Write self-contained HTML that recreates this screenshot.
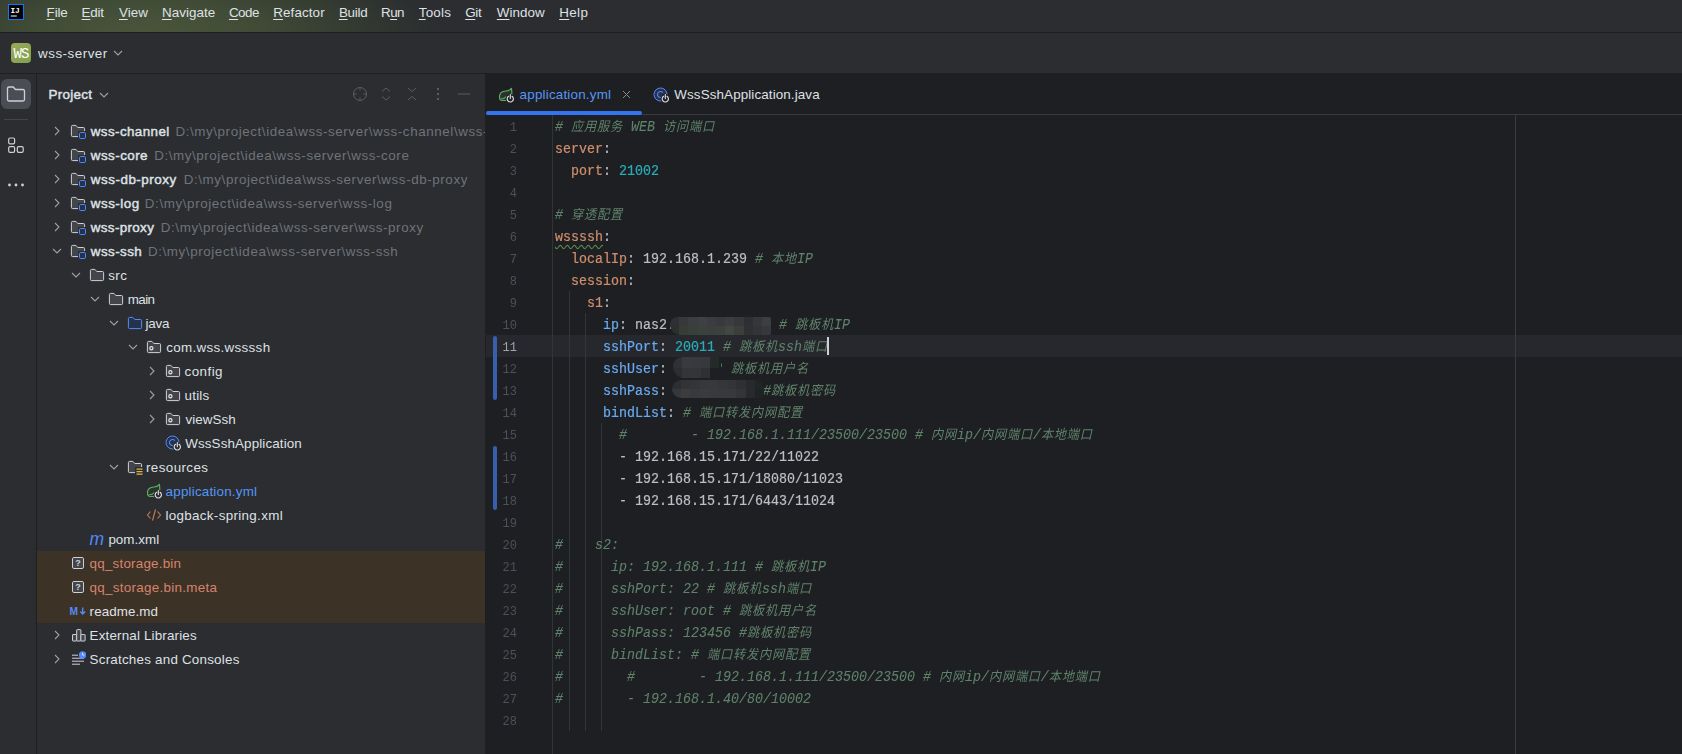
<!DOCTYPE html><html lang="zh"><head><meta charset="utf-8"><title>wss-server – application.yml</title><style>
*{box-sizing:border-box;margin:0;padding:0}
html,body{width:1682px;height:754px;overflow:hidden;background:#1e1f22}
body{position:relative;font-family:"Liberation Sans","Noto Sans CJK SC",sans-serif;font-size:13.4px;color:#dfe1e5;-webkit-font-smoothing:antialiased}
.abs{position:absolute}
#menubar{left:0;top:0;width:1682px;height:32px;background:radial-gradient(ellipse 295px 95px at 145px 36px,#4a563b 0%,#414c37 38%,#343b31 70%,#2b2d30 100%),#2b2d30}
#menuline{left:0;top:32px;width:1682px;height:1px;background:#1e1f22}
#toolbar{left:0;top:33px;width:1682px;height:40px;background:#2b2d30}
#toolline{left:0;top:73px;width:1682px;height:1px;background:#1e1f22}
#strip{left:0;top:74px;width:36px;height:680px;background:#2b2d30}
#stripline{left:36px;top:74px;width:1px;height:680px;background:#1e1f22}
#panel{left:37px;top:74px;width:448px;height:680px;background:#2b2d30;overflow:hidden}
#editor{left:486px;top:74px;width:1196px;height:680px;background:#1e1f22;overflow:hidden}
.mi{position:absolute;top:5px;height:16px;line-height:16px;font-size:13.4px;color:#dfe1e5;white-space:nowrap}
.mi u{text-decoration:underline;text-underline-offset:1.5px;text-decoration-thickness:1px}
.t{position:absolute;white-space:nowrap;line-height:16px;height:16px;font-size:13.4px}
.row{position:absolute;left:0;width:449px;height:24px}
.gray{color:#6f737a}
.mono{font-family:"Liberation Mono","Noto Sans CJK SC",monospace}
.b{font-weight:normal;-webkit-text-stroke:0.45px currentColor}
.code{position:absolute;left:69px;margin-top:1.5px;transform:scaleY(1.09);transform-origin:0 14.6px;-webkit-text-stroke:0.2px currentColor;white-space:pre;font-family:"Liberation Mono","Noto Sans CJK SC",monospace;font-size:13.333px;line-height:22px;height:22px;color:#bcbec4}
.ln{position:absolute;left:0;margin-top:2px;transform:scaleY(1.09);transform-origin:0 14.2px;width:31px;text-align:right;font-family:"Liberation Mono","Noto Sans CJK SC",monospace;font-size:12px;line-height:22px;height:22px;color:#4b5059}
.k{color:#cf8e6d} .k2{color:#6aaaf0} .n{color:#2aacb8} .c{color:#5f826b;font-style:italic;-webkit-text-stroke:0.08px currentColor}
.z{font-size:12.2px;letter-spacing:0.8px;font-weight:400;-webkit-text-stroke:0}
.guide{position:absolute;width:1px;background:#313438}
.chg{position:absolute;left:7px;width:4px;background:#375fad;border-radius:2px}
.mosaic{position:absolute;filter:blur(1.2px)}
</style></head><body>
<div id="menubar" class="abs"></div><div id="menuline" class="abs"></div>
<svg class="abs" style="left:8px;top:4px" width="16" height="16" viewBox="0 0 16 16"><rect x="0.5" y="0.5" width="15" height="15" fill="#000" stroke="#087cfa" stroke-width="1"/><text x="2.4" y="8.8" font-family='"Liberation Mono",monospace' font-weight="bold" font-size="7.8" fill="#fff">IJ</text><rect x="2.8" y="11.5" width="6" height="1" fill="#fff"/></svg>
<div class="mi" id="m_File" style="left:46.60px;letter-spacing:-0.133px"><u>F</u>ile</div>
<div class="mi" id="m_Edit" style="left:81.60px;letter-spacing:-0.267px"><u>E</u>dit</div>
<div class="mi" id="m_View" style="left:119.00px;letter-spacing:0.000px"><u>V</u>iew</div>
<div class="mi" id="m_Navigate" style="left:161.90px;letter-spacing:0.057px"><u>N</u>avigate</div>
<div class="mi" id="m_Code" style="left:228.90px;letter-spacing:-0.467px"><u>C</u>ode</div>
<div class="mi" id="m_Refactor" style="left:273.20px;letter-spacing:0.114px"><u>R</u>efactor</div>
<div class="mi" id="m_Build" style="left:338.90px;letter-spacing:-0.250px"><u>B</u>uild</div>
<div class="mi" id="m_Run" style="left:381.10px;letter-spacing:-0.600px">R<u>u</u>n</div>
<div class="mi" id="m_Tools" style="left:418.80px;letter-spacing:0.200px"><u>T</u>ools</div>
<div class="mi" id="m_Git" style="left:465.20px;letter-spacing:-0.300px"><u>G</u>it</div>
<div class="mi" id="m_Window" style="left:496.80px;letter-spacing:0.040px"><u>W</u>indow</div>
<div class="mi" id="m_Help" style="left:559.20px;letter-spacing:0.400px"><u>H</u>elp</div>
<div id="toolbar" class="abs"></div><div id="toolline" class="abs"></div>
<div class="abs" style="left:11px;top:43px;width:20px;height:20px;border-radius:4px;background:linear-gradient(135deg,#9aa85a,#7fa24e)"></div>
<div class="t mono" id="t_ws" style="left:13.4px;top:46px;font-size:14px;color:#fff;letter-spacing:-0.7px">WS</div>
<div class="t" id="t_proj" style="left:38.10px;letter-spacing:0.489px;top:45.5px">wss-server</div>
<svg class="abs" style="left:113px;top:49px" width="10" height="8" viewBox="0 0 10 8"><path d="M1 2 L5 6 L9 2" fill="none" stroke="#9da0a8" stroke-width="1.1"/></svg>
<div id="strip" class="abs"></div><div id="stripline" class="abs"></div>
<div class="abs" style="left:1px;top:79px;width:30px;height:30px;border-radius:6px;background:#4a4d54"></div>
<svg class="abs" style="left:6px;top:85px" width="20" height="18" viewBox="0 0 20 18"><path d="M1.5 3.5 a1.5 1.5 0 0 1 1.5 -1.5 h4.2 l2.3 2.5 h7.5 a1.5 1.5 0 0 1 1.5 1.5 v8.5 a1.5 1.5 0 0 1 -1.5 1.5 h-14 a1.5 1.5 0 0 1 -1.5 -1.5 z" fill="none" stroke="#ced0d6" stroke-width="1.3"/></svg>
<div class="abs" style="left:4px;top:119px;width:24px;height:1px;background:#43454a"></div>
<svg class="abs" style="left:7px;top:136px" width="18" height="18" viewBox="0 0 18 18"><g fill="none" stroke="#ced0d6" stroke-width="1.2"><rect x="1.7" y="2" width="5.9" height="5.8" rx="1.3"/><rect x="1.7" y="10.6" width="5.9" height="5.8" rx="1.3"/><rect x="10.3" y="10.6" width="5.9" height="5.8" rx="1.3"/></g></svg>
<svg class="abs" style="left:7px;top:182px" width="18" height="6" viewBox="0 0 18 6"><g fill="#ced0d6"><circle cx="2.5" cy="3" r="1.4"/><circle cx="9" cy="3" r="1.4"/><circle cx="15.5" cy="3" r="1.4"/></g></svg>
<div id="panel" class="abs">
<div class="t b" id="t_Project" style="left:11.60px;letter-spacing:0.267px;top:13px">Project</div>
<svg class="abs" style="left:62px;top:17px" width="10" height="8" viewBox="0 0 10 8"><path d="M1 2 L5 6 L9 2" fill="none" stroke="#9da0a8" stroke-width="1.1"/></svg>
<svg class="abs" style="left:315px;top:12px" width="16" height="16" viewBox="0 0 16 16"><g fill="none" stroke="#5a5d63" stroke-width="1"><circle cx="8" cy="8" r="6.5"/><path d="M8 1.5v3M8 11.5v3M1.5 8h3M11.5 8h3"/></g></svg>
<svg class="abs" style="left:341px;top:12px" width="16" height="16" viewBox="0 0 16 16"><g fill="none" stroke="#5a5d63" stroke-width="1"><path d="M4 5.5 L8 2 L12 5.5M4 10.5 L8 14 L12 10.5"/></g></svg>
<svg class="abs" style="left:367px;top:12px" width="16" height="16" viewBox="0 0 16 16"><g fill="none" stroke="#5a5d63" stroke-width="1"><path d="M4 2 L8 5.5 L12 2M4 14 L8 10.5 L12 14"/></g></svg>
<svg class="abs" style="left:393px;top:12px" width="16" height="16" viewBox="0 0 16 16"><g fill="#5a5d63"><rect x="7" y="2" width="2" height="2"/><rect x="7" y="7" width="2" height="2"/><rect x="7" y="12" width="2" height="2"/></g></svg>
<svg class="abs" style="left:419px;top:12px" width="16" height="16" viewBox="0 0 16 16"><rect x="1.7" y="7.5" width="12.6" height="1" fill="#5a5d63"/></svg>
<div class="abs" style="left:0;top:477px;width:449px;height:72px;background:#3d3226"></div>
<svg class="abs" style="left:15.5px;top:52px" width="8" height="10" viewBox="0 0 8 10"><path d="M2 1 L6 5 L2 9" fill="none" stroke="#9da0a8" stroke-width="1.1"/></svg>
<svg class="abs" style="left:33px;top:49px" width="16" height="16" viewBox="0 0 16 16"><path d="M1.4 3.6 a1.2 1.2 0 0 1 1.2 -1.2 h3.3 l1.9 2.1 h5.6 a1.2 1.2 0 0 1 1.2 1.2 v6.7 a1.2 1.2 0 0 1 -1.2 1.2 h-10.8 a1.2 1.2 0 0 1 -1.2 -1.2 z" fill="#43454a" stroke="#ced0d6" stroke-width="1"/><rect x="8" y="8" width="8" height="8" fill="#2b2d30"/><rect x="9.5" y="9.5" width="6" height="6" rx="1.2" fill="#25324d" stroke="#548af7" stroke-width="1"/></svg>
<div class="t b" id="r0" style="left:53.80px;letter-spacing:0.400px;top:49.5px;color:#dfe1e5">wss-channel</div>
<div class="t gray" id="p0" style="left:138.40px;letter-spacing:0.585px;top:49.5px">D:\my\project\idea\wss-server\wss-channel\wss-channel</div>
<svg class="abs" style="left:15.5px;top:76px" width="8" height="10" viewBox="0 0 8 10"><path d="M2 1 L6 5 L2 9" fill="none" stroke="#9da0a8" stroke-width="1.1"/></svg>
<svg class="abs" style="left:33px;top:73px" width="16" height="16" viewBox="0 0 16 16"><path d="M1.4 3.6 a1.2 1.2 0 0 1 1.2 -1.2 h3.3 l1.9 2.1 h5.6 a1.2 1.2 0 0 1 1.2 1.2 v6.7 a1.2 1.2 0 0 1 -1.2 1.2 h-10.8 a1.2 1.2 0 0 1 -1.2 -1.2 z" fill="#43454a" stroke="#ced0d6" stroke-width="1"/><rect x="8" y="8" width="8" height="8" fill="#2b2d30"/><rect x="9.5" y="9.5" width="6" height="6" rx="1.2" fill="#25324d" stroke="#548af7" stroke-width="1"/></svg>
<div class="t b" id="r1" style="left:53.80px;letter-spacing:0.457px;top:73.5px;color:#dfe1e5">wss-core</div>
<div class="t gray" id="p1" style="left:117.20px;letter-spacing:0.568px;top:73.5px">D:\my\project\idea\wss-server\wss-core</div>
<svg class="abs" style="left:15.5px;top:100px" width="8" height="10" viewBox="0 0 8 10"><path d="M2 1 L6 5 L2 9" fill="none" stroke="#9da0a8" stroke-width="1.1"/></svg>
<svg class="abs" style="left:33px;top:97px" width="16" height="16" viewBox="0 0 16 16"><path d="M1.4 3.6 a1.2 1.2 0 0 1 1.2 -1.2 h3.3 l1.9 2.1 h5.6 a1.2 1.2 0 0 1 1.2 1.2 v6.7 a1.2 1.2 0 0 1 -1.2 1.2 h-10.8 a1.2 1.2 0 0 1 -1.2 -1.2 z" fill="#43454a" stroke="#ced0d6" stroke-width="1"/><rect x="8" y="8" width="8" height="8" fill="#2b2d30"/><rect x="9.5" y="9.5" width="6" height="6" rx="1.2" fill="#25324d" stroke="#548af7" stroke-width="1"/></svg>
<div class="t b" id="r2" style="left:53.80px;letter-spacing:0.527px;top:97.5px;color:#dfe1e5">wss-db-proxy</div>
<div class="t gray" id="p2" style="left:146.70px;letter-spacing:0.585px;top:97.5px">D:\my\project\idea\wss-server\wss-db-proxy</div>
<svg class="abs" style="left:15.5px;top:124px" width="8" height="10" viewBox="0 0 8 10"><path d="M2 1 L6 5 L2 9" fill="none" stroke="#9da0a8" stroke-width="1.1"/></svg>
<svg class="abs" style="left:33px;top:121px" width="16" height="16" viewBox="0 0 16 16"><path d="M1.4 3.6 a1.2 1.2 0 0 1 1.2 -1.2 h3.3 l1.9 2.1 h5.6 a1.2 1.2 0 0 1 1.2 1.2 v6.7 a1.2 1.2 0 0 1 -1.2 1.2 h-10.8 a1.2 1.2 0 0 1 -1.2 -1.2 z" fill="#43454a" stroke="#ced0d6" stroke-width="1"/><rect x="8" y="8" width="8" height="8" fill="#2b2d30"/><rect x="9.5" y="9.5" width="6" height="6" rx="1.2" fill="#25324d" stroke="#548af7" stroke-width="1"/></svg>
<div class="t b" id="r3" style="left:53.80px;letter-spacing:0.500px;top:121.5px;color:#dfe1e5">wss-log</div>
<div class="t gray" id="p3" style="left:107.80px;letter-spacing:0.600px;top:121.5px">D:\my\project\idea\wss-server\wss-log</div>
<svg class="abs" style="left:15.5px;top:148px" width="8" height="10" viewBox="0 0 8 10"><path d="M2 1 L6 5 L2 9" fill="none" stroke="#9da0a8" stroke-width="1.1"/></svg>
<svg class="abs" style="left:33px;top:145px" width="16" height="16" viewBox="0 0 16 16"><path d="M1.4 3.6 a1.2 1.2 0 0 1 1.2 -1.2 h3.3 l1.9 2.1 h5.6 a1.2 1.2 0 0 1 1.2 1.2 v6.7 a1.2 1.2 0 0 1 -1.2 1.2 h-10.8 a1.2 1.2 0 0 1 -1.2 -1.2 z" fill="#43454a" stroke="#ced0d6" stroke-width="1"/><rect x="8" y="8" width="8" height="8" fill="#2b2d30"/><rect x="9.5" y="9.5" width="6" height="6" rx="1.2" fill="#25324d" stroke="#548af7" stroke-width="1"/></svg>
<div class="t b" id="r4" style="left:53.80px;letter-spacing:0.350px;top:145.5px;color:#dfe1e5">wss-proxy</div>
<div class="t gray" id="p4" style="left:123.80px;letter-spacing:0.579px;top:145.5px">D:\my\project\idea\wss-server\wss-proxy</div>
<svg class="abs" style="left:14.5px;top:173px" width="10" height="8" viewBox="0 0 10 8"><path d="M1 2 L5 6 L9 2" fill="none" stroke="#9da0a8" stroke-width="1.1"/></svg>
<svg class="abs" style="left:33px;top:169px" width="16" height="16" viewBox="0 0 16 16"><path d="M1.4 3.6 a1.2 1.2 0 0 1 1.2 -1.2 h3.3 l1.9 2.1 h5.6 a1.2 1.2 0 0 1 1.2 1.2 v6.7 a1.2 1.2 0 0 1 -1.2 1.2 h-10.8 a1.2 1.2 0 0 1 -1.2 -1.2 z" fill="#43454a" stroke="#ced0d6" stroke-width="1"/><rect x="8" y="8" width="8" height="8" fill="#2b2d30"/><rect x="9.5" y="9.5" width="6" height="6" rx="1.2" fill="#25324d" stroke="#548af7" stroke-width="1"/></svg>
<div class="t b" id="r5" style="left:53.80px;letter-spacing:0.433px;top:169.5px;color:#dfe1e5">wss-ssh</div>
<div class="t gray" id="p5" style="left:110.90px;letter-spacing:0.594px;top:169.5px">D:\my\project\idea\wss-server\wss-ssh</div>
<svg class="abs" style="left:33.5px;top:197px" width="10" height="8" viewBox="0 0 10 8"><path d="M1 2 L5 6 L9 2" fill="none" stroke="#9da0a8" stroke-width="1.1"/></svg>
<svg class="abs" style="left:52px;top:193px" width="16" height="16" viewBox="0 0 16 16"><path d="M1.4 3.6 a1.2 1.2 0 0 1 1.2 -1.2 h3.3 l1.9 2.1 h5.6 a1.2 1.2 0 0 1 1.2 1.2 v6.7 a1.2 1.2 0 0 1 -1.2 1.2 h-10.8 a1.2 1.2 0 0 1 -1.2 -1.2 z" fill="#43454a" stroke="#ced0d6" stroke-width="1"/></svg>
<div class="t" id="r6" style="left:71.20px;letter-spacing:0.400px;top:193.5px;color:#dfe1e5">src</div>
<svg class="abs" style="left:52.5px;top:221px" width="10" height="8" viewBox="0 0 10 8"><path d="M1 2 L5 6 L9 2" fill="none" stroke="#9da0a8" stroke-width="1.1"/></svg>
<svg class="abs" style="left:71px;top:217px" width="16" height="16" viewBox="0 0 16 16"><path d="M1.4 3.6 a1.2 1.2 0 0 1 1.2 -1.2 h3.3 l1.9 2.1 h5.6 a1.2 1.2 0 0 1 1.2 1.2 v6.7 a1.2 1.2 0 0 1 -1.2 1.2 h-10.8 a1.2 1.2 0 0 1 -1.2 -1.2 z" fill="#43454a" stroke="#ced0d6" stroke-width="1"/></svg>
<div class="t" id="r7" style="left:90.80px;letter-spacing:-0.600px;top:217.5px;color:#dfe1e5">main</div>
<svg class="abs" style="left:71.5px;top:245px" width="10" height="8" viewBox="0 0 10 8"><path d="M1 2 L5 6 L9 2" fill="none" stroke="#9da0a8" stroke-width="1.1"/></svg>
<svg class="abs" style="left:90px;top:241px" width="16" height="16" viewBox="0 0 16 16"><path d="M1.4 3.6 a1.2 1.2 0 0 1 1.2 -1.2 h3.3 l1.9 2.1 h5.6 a1.2 1.2 0 0 1 1.2 1.2 v6.7 a1.2 1.2 0 0 1 -1.2 1.2 h-10.8 a1.2 1.2 0 0 1 -1.2 -1.2 z" fill="#25324d" stroke="#548af7" stroke-width="1"/></svg>
<div class="t" id="r8" style="left:108.60px;letter-spacing:-0.200px;top:241.5px;color:#dfe1e5">java</div>
<svg class="abs" style="left:90.5px;top:269px" width="10" height="8" viewBox="0 0 10 8"><path d="M1 2 L5 6 L9 2" fill="none" stroke="#9da0a8" stroke-width="1.1"/></svg>
<svg class="abs" style="left:109px;top:265px" width="16" height="16" viewBox="0 0 16 16"><path d="M1.4 3.6 a1.2 1.2 0 0 1 1.2 -1.2 h3.3 l1.9 2.1 h5.6 a1.2 1.2 0 0 1 1.2 1.2 v6.7 a1.2 1.2 0 0 1 -1.2 1.2 h-10.8 a1.2 1.2 0 0 1 -1.2 -1.2 z" fill="#43454a" stroke="#ced0d6" stroke-width="1"/><circle cx="5.4" cy="9.2" r="1.6" fill="#43454a" stroke="#e6e8ec" stroke-width="1.15"/></svg>
<div class="t" id="r9" style="left:129.20px;letter-spacing:0.323px;top:265.5px;color:#dfe1e5">com.wss.wssssh</div>
<svg class="abs" style="left:110.5px;top:292px" width="8" height="10" viewBox="0 0 8 10"><path d="M2 1 L6 5 L2 9" fill="none" stroke="#9da0a8" stroke-width="1.1"/></svg>
<svg class="abs" style="left:128px;top:289px" width="16" height="16" viewBox="0 0 16 16"><path d="M1.4 3.6 a1.2 1.2 0 0 1 1.2 -1.2 h3.3 l1.9 2.1 h5.6 a1.2 1.2 0 0 1 1.2 1.2 v6.7 a1.2 1.2 0 0 1 -1.2 1.2 h-10.8 a1.2 1.2 0 0 1 -1.2 -1.2 z" fill="#43454a" stroke="#ced0d6" stroke-width="1"/><circle cx="5.4" cy="9.2" r="1.6" fill="#43454a" stroke="#e6e8ec" stroke-width="1.15"/></svg>
<div class="t" id="r10" style="left:147.60px;letter-spacing:0.440px;top:289.5px;color:#dfe1e5">config</div>
<svg class="abs" style="left:110.5px;top:316px" width="8" height="10" viewBox="0 0 8 10"><path d="M2 1 L6 5 L2 9" fill="none" stroke="#9da0a8" stroke-width="1.1"/></svg>
<svg class="abs" style="left:128px;top:313px" width="16" height="16" viewBox="0 0 16 16"><path d="M1.4 3.6 a1.2 1.2 0 0 1 1.2 -1.2 h3.3 l1.9 2.1 h5.6 a1.2 1.2 0 0 1 1.2 1.2 v6.7 a1.2 1.2 0 0 1 -1.2 1.2 h-10.8 a1.2 1.2 0 0 1 -1.2 -1.2 z" fill="#43454a" stroke="#ced0d6" stroke-width="1"/><circle cx="5.4" cy="9.2" r="1.6" fill="#43454a" stroke="#e6e8ec" stroke-width="1.15"/></svg>
<div class="t" id="r11" style="left:147.60px;letter-spacing:0.200px;top:313.5px;color:#dfe1e5">utils</div>
<svg class="abs" style="left:110.5px;top:340px" width="8" height="10" viewBox="0 0 8 10"><path d="M2 1 L6 5 L2 9" fill="none" stroke="#9da0a8" stroke-width="1.1"/></svg>
<svg class="abs" style="left:128px;top:337px" width="16" height="16" viewBox="0 0 16 16"><path d="M1.4 3.6 a1.2 1.2 0 0 1 1.2 -1.2 h3.3 l1.9 2.1 h5.6 a1.2 1.2 0 0 1 1.2 1.2 v6.7 a1.2 1.2 0 0 1 -1.2 1.2 h-10.8 a1.2 1.2 0 0 1 -1.2 -1.2 z" fill="#43454a" stroke="#ced0d6" stroke-width="1"/><circle cx="5.4" cy="9.2" r="1.6" fill="#43454a" stroke="#e6e8ec" stroke-width="1.15"/></svg>
<div class="t" id="r12" style="left:148.60px;letter-spacing:0.033px;top:337.5px;color:#dfe1e5">viewSsh</div>
<svg class="abs" style="left:128px;top:361px" width="16" height="16" viewBox="0 0 16 16"><circle cx="7.5" cy="7.5" r="6.5" fill="#25324d" stroke="#548af7" stroke-width="1"/><path d="M9.8 5.6 a3 3 0 1 0 0 3.8" fill="none" stroke="#548af7" stroke-width="1.1"/><circle cx="12.3" cy="11.8" r="4.7" fill="#2b2d30"/><path d="M10.6 9.3 a3.1 3.1 0 1 0 3.4 0M12.3 7.6v4" fill="none" stroke="#dfe1e5" stroke-width="1.15" stroke-linecap="round"/></svg>
<div class="t" id="r13" style="left:148.20px;letter-spacing:0.125px;top:361.5px;color:#dfe1e5">WssSshApplication</div>
<svg class="abs" style="left:71.5px;top:389px" width="10" height="8" viewBox="0 0 10 8"><path d="M1 2 L5 6 L9 2" fill="none" stroke="#9da0a8" stroke-width="1.1"/></svg>
<svg class="abs" style="left:90px;top:385px" width="16" height="16" viewBox="0 0 16 16"><path d="M1.4 3.6 a1.2 1.2 0 0 1 1.2 -1.2 h3.3 l1.9 2.1 h5.6 a1.2 1.2 0 0 1 1.2 1.2 v6.7 a1.2 1.2 0 0 1 -1.2 1.2 h-10.8 a1.2 1.2 0 0 1 -1.2 -1.2 z" fill="#43454a" stroke="#ced0d6" stroke-width="1"/><rect x="8" y="8" width="8" height="8" fill="#2b2d30"/><path d="M9.5 10h6M9.5 12.5h6M9.5 15h6" stroke="#e2b54a" stroke-width="1.25"/></svg>
<div class="t" id="r14" style="left:109.00px;letter-spacing:0.400px;top:385.5px;color:#dfe1e5">resources</div>
<svg class="abs" style="left:109px;top:409px" width="16" height="16" viewBox="0 0 16 16"><path d="M13.4 1.3 C12.2 3 10.5 3.8 8 4 C4 4.3 1.5 6.3 1.5 9.5 C1.5 12 2.6 13.5 4.2 13.5 L9 13.5 C12.6 12.5 14.8 8 13.4 1.3 Z" fill="#29352c" stroke="#5fad65" stroke-width="1.2" stroke-linejoin="round"/><path d="M3.2 11.7 C5.4 11.9 7.2 11 8.4 9.2" fill="none" stroke="#5fad65" stroke-width="1.1"/><circle cx="12.3" cy="11.8" r="4.7" fill="#2b2d30"/><path d="M10.6 9.3 a3.1 3.1 0 1 0 3.4 0M12.3 7.6v4" fill="none" stroke="#dfe1e5" stroke-width="1.15" stroke-linecap="round"/></svg>
<div class="t" id="r15" style="left:128.60px;letter-spacing:0.200px;top:409.5px;color:#5596f4">application.yml</div>
<svg class="abs" style="left:109px;top:433px" width="16" height="16" viewBox="0 0 16 16"><path d="M4.5 4.5 L1.5 8 L4.5 11.5M11.5 4.5 L14.5 8 L11.5 11.5M9.5 2.5 L6.5 13.5" fill="none" stroke="#c77d55" stroke-width="1.1"/></svg>
<div class="t" id="r16" style="left:128.40px;letter-spacing:0.329px;top:433.5px;color:#dfe1e5">logback-spring.xml</div>
<div class="t ico" style="left:52.5px;top:455.7px;font-size:17.5px;line-height:18px;font-style:italic;color:#548af7">m</div>
<div class="t" id="r17" style="left:71.40px;letter-spacing:0.033px;top:457.5px;color:#dfe1e5">pom.xml</div>
<svg class="abs" style="left:33px;top:481px" width="16" height="16" viewBox="0 0 16 16"><rect x="2.5" y="2.5" width="11" height="11" rx="1.4" fill="#43454a" stroke="#ced0d6" stroke-width="1"/><text x="8" y="11.3" text-anchor="middle" font-family='"Liberation Sans",sans-serif' font-weight="bold" font-size="9" fill="#ced0d6">?</text></svg>
<div class="t" id="r18" style="left:52.60px;letter-spacing:0.215px;top:481.5px;color:#d6836d">qq_storage.bin</div>
<svg class="abs" style="left:33px;top:505px" width="16" height="16" viewBox="0 0 16 16"><rect x="2.5" y="2.5" width="11" height="11" rx="1.4" fill="#43454a" stroke="#ced0d6" stroke-width="1"/><text x="8" y="11.3" text-anchor="middle" font-family='"Liberation Sans",sans-serif' font-weight="bold" font-size="9" fill="#ced0d6">?</text></svg>
<div class="t" id="r19" style="left:52.60px;letter-spacing:0.289px;top:505.5px;color:#d6836d">qq_storage.bin.meta</div>
<svg class="abs" style="left:32px;top:529px" width="18" height="16" viewBox="0 0 18 16"><text x="0.6" y="11.6" font-family='"Liberation Sans",sans-serif' font-weight="bold" font-size="10.2" fill="#548af7">M</text><path d="M13.7 4.6v6.2M11.3 8.6l2.4 2.5l2.4 -2.5" fill="none" stroke="#548af7" stroke-width="1.4"/></svg>
<div class="t" id="r20" style="left:52.60px;letter-spacing:0.075px;top:529.5px;color:#dfe1e5">readme.md</div>
<svg class="abs" style="left:15.5px;top:556px" width="8" height="10" viewBox="0 0 8 10"><path d="M2 1 L6 5 L2 9" fill="none" stroke="#9da0a8" stroke-width="1.1"/></svg>
<svg class="abs" style="left:33px;top:553px" width="16" height="16" viewBox="0 0 16 16"><g fill="#43454a" stroke="#ced0d6" stroke-width="1"><rect x="2.5" y="7.5" width="4.2" height="6.5" rx="0.5"/><rect x="6.7" y="2.6" width="4.2" height="11.4" rx="0.5"/><rect x="10.9" y="7.5" width="4.2" height="6.5" rx="0.5"/></g></svg>
<div class="t" id="r21" style="left:52.60px;letter-spacing:0.165px;top:553.5px;color:#dfe1e5">External Libraries</div>
<svg class="abs" style="left:15.5px;top:580px" width="8" height="10" viewBox="0 0 8 10"><path d="M2 1 L6 5 L2 9" fill="none" stroke="#9da0a8" stroke-width="1.1"/></svg>
<svg class="abs" style="left:33px;top:577px" width="16" height="16" viewBox="0 0 16 16"><g fill="none" stroke="#ced0d6" stroke-width="1"><path d="M2 4.2h6M2 7.2h12M2 10.2h12M2 13.2h8"/></g><circle cx="12.6" cy="3.9" r="3.7" fill="#548af7"/><path d="M12.6 1.8v2.3h1.7" stroke="#e8eaef" stroke-width="0.9" fill="none"/></svg>
<div class="t" id="r22" style="left:52.60px;letter-spacing:0.219px;top:577.5px;color:#dfe1e5">Scratches and Consoles</div>
</div>
<div id="editor" class="abs">
<div class="abs" style="left:0;top:40px;width:1196px;height:1px;background:#393b40"></div>
<div class="abs" style="left:0;top:37px;width:156px;height:4px;border-radius:2px;background:#3574f0"></div>
<svg class="abs" style="left:11.6px;top:13px" width="16" height="16" viewBox="0 0 16 16"><path d="M13.4 1.3 C12.2 3 10.5 3.8 8 4 C4 4.3 1.5 6.3 1.5 9.5 C1.5 12 2.6 13.5 4.2 13.5 L9 13.5 C12.6 12.5 14.8 8 13.4 1.3 Z" fill="#29352c" stroke="#5fad65" stroke-width="1.2" stroke-linejoin="round"/><path d="M3.2 11.7 C5.4 11.9 7.2 11 8.4 9.2" fill="none" stroke="#5fad65" stroke-width="1.1"/><circle cx="12.3" cy="11.8" r="4.7" fill="#1e1f22"/><path d="M10.6 9.3 a3.1 3.1 0 1 0 3.4 0M12.3 7.6v4" fill="none" stroke="#dfe1e5" stroke-width="1.15" stroke-linecap="round"/></svg>
<div class="t" id="tab1" style="left:33.60px;letter-spacing:0.200px;top:12.5px;color:#5596f4">application.yml</div>
<svg class="abs" style="left:135.5px;top:16px" width="9" height="9" viewBox="0 0 9 9"><path d="M1 1 L8 8 M8 1 L1 8" stroke="#868a91" stroke-width="1"/></svg>
<svg class="abs" style="left:166.8px;top:13px" width="16" height="16" viewBox="0 0 16 16"><circle cx="7.5" cy="7.5" r="6.5" fill="#25324d" stroke="#548af7" stroke-width="1"/><path d="M9.8 5.6 a3 3 0 1 0 0 3.8" fill="none" stroke="#548af7" stroke-width="1.1"/><circle cx="12.3" cy="11.8" r="4.7" fill="#1e1f22"/><path d="M10.6 9.3 a3.1 3.1 0 1 0 3.4 0M12.3 7.6v4" fill="none" stroke="#dfe1e5" stroke-width="1.15" stroke-linecap="round"/></svg>
<div class="t" id="tab2" style="left:188.30px;letter-spacing:0.114px;top:12.5px;color:#dfe1e5">WssSshApplication.java</div>
<div class="abs" style="left:0;top:261px;width:1196px;height:22px;background:#26282e"></div>
<div class="abs" style="left:1029px;top:41px;width:1px;height:639px;background:#393b40"></div>
<div class="abs" style="left:66px;top:41px;width:1px;height:639px;background:#313438"></div>
<div class="chg" style="top:262px;height:64px"></div>
<div class="chg" style="top:372px;height:64px"></div>
<div class="guide" style="left:83px;top:217px;height:440px"></div>
<div class="guide" style="left:99px;top:239px;height:418px"></div>
<div class="guide" style="left:115px;top:349px;height:308px"></div>
<div class="ln" style="top:41px;color:#4b5059">1</div>
<div class="code" style="top:41px"><span class="c"># <span class="z">应用服务</span> WEB <span class="z">访问端口</span></span></div>
<div class="ln" style="top:63px;color:#4b5059">2</div>
<div class="code" style="top:63px"><span class="k">server</span>:</div>
<div class="ln" style="top:85px;color:#4b5059">3</div>
<div class="code" style="top:85px">  <span class="k">port</span>: <span class="n">21002</span></div>
<div class="ln" style="top:107px;color:#4b5059">4</div>
<div class="ln" style="top:129px;color:#4b5059">5</div>
<div class="code" style="top:129px"><span class="c"># <span class="z">穿透配置</span></span></div>
<div class="ln" style="top:151px;color:#4b5059">6</div>
<div class="code" style="top:151px"><span class="k" style="text-decoration:underline wavy #5a8a4a 1px;text-underline-offset:3px">wssssh</span>:</div>
<div class="ln" style="top:173px;color:#4b5059">7</div>
<div class="code" style="top:173px">  <span class="k">localIp</span>: 192.168.1.239 <span class="c"># <span class="z">本地</span>IP</span></div>
<div class="ln" style="top:195px;color:#4b5059">8</div>
<div class="code" style="top:195px">  <span class="k">session</span>:</div>
<div class="ln" style="top:217px;color:#4b5059">9</div>
<div class="code" style="top:217px">    <span class="k">s1</span>:</div>
<div class="ln" style="top:239px;color:#4b5059">10</div>
<div class="code" style="top:239px">      <span class="k2">ip</span>: nas2.<span id="mz1"></span></div>
<div class="ln" style="top:261px;color:#a1a3ab">11</div>
<div class="code" style="top:261px">      <span class="k2">sshPort</span>: <span class="n">20011</span> <span class="c"># <span class="z">跳板机</span>ssh<span class="z">端口</span></span></div>
<div class="ln" style="top:283px;color:#4b5059">12</div>
<div class="code" style="top:283px">      <span class="k2">sshUser</span>: </div>
<div class="ln" style="top:305px;color:#4b5059">13</div>
<div class="code" style="top:305px">      <span class="k2">sshPass</span>: </div>
<div class="ln" style="top:327px;color:#4b5059">14</div>
<div class="code" style="top:327px">      <span class="k2">bindList</span>: <span class="c"># <span class="z">端口转发内网配置</span></span></div>
<div class="ln" style="top:349px;color:#4b5059">15</div>
<div class="code" style="top:349px">        <span class="c">#        - 192.168.1.111/23500/23500 # <span class="z">内网</span>ip/<span class="z">内网端口</span>/<span class="z">本地端口</span></span></div>
<div class="ln" style="top:371px;color:#4b5059">16</div>
<div class="code" style="top:371px">        - 192.168.15.171/22/11022</div>
<div class="ln" style="top:393px;color:#4b5059">17</div>
<div class="code" style="top:393px">        - 192.168.15.171/18080/11023</div>
<div class="ln" style="top:415px;color:#4b5059">18</div>
<div class="code" style="top:415px">        - 192.168.15.171/6443/11024</div>
<div class="ln" style="top:437px;color:#4b5059">19</div>
<div class="ln" style="top:459px;color:#4b5059">20</div>
<div class="code" style="top:459px"><span class="c">#    s2:</span></div>
<div class="ln" style="top:481px;color:#4b5059">21</div>
<div class="code" style="top:481px"><span class="c">#      ip: 192.168.1.111 # <span class="z">跳板机</span>IP</span></div>
<div class="ln" style="top:503px;color:#4b5059">22</div>
<div class="code" style="top:503px"><span class="c">#      sshPort: 22 # <span class="z">跳板机</span>ssh<span class="z">端口</span></span></div>
<div class="ln" style="top:525px;color:#4b5059">23</div>
<div class="code" style="top:525px"><span class="c">#      sshUser: root # <span class="z">跳板机用户名</span></span></div>
<div class="ln" style="top:547px;color:#4b5059">24</div>
<div class="code" style="top:547px"><span class="c">#      sshPass: 123456 #<span class="z">跳板机密码</span></span></div>
<div class="ln" style="top:569px;color:#4b5059">25</div>
<div class="code" style="top:569px"><span class="c">#      bindList: # <span class="z">端口转发内网配置</span></span></div>
<div class="ln" style="top:591px;color:#4b5059">26</div>
<div class="code" style="top:591px"><span class="c">#        #        - 192.168.1.111/23500/23500 # <span class="z">内网</span>ip/<span class="z">内网端口</span>/<span class="z">本地端口</span></span></div>
<div class="ln" style="top:613px;color:#4b5059">27</div>
<div class="code" style="top:613px"><span class="c">#        - 192.168.1.40/80/10002</span></div>
<div class="ln" style="top:635px;color:#4b5059">28</div>
<div class="code c" style="left:293px;top:239px"># <span class="z">跳板机</span>IP</div>
<div class="code c" style="left:245px;top:283px"><span class="z">跳板机用户名</span></div>
<div class="code c" style="left:277px;top:305px">#<span class="z">跳板机密码</span></div>
<div class="abs" style="left:184px;top:243px;width:101.2px;height:18px;border-radius:9px 2px 2px 12px;overflow:hidden;filter:blur(0.5px)"><div class="abs" style="left:0.0px;top:0px;width:9.7px;height:9.5px;background:#2e3034"></div><div class="abs" style="left:9.2px;top:0px;width:9.7px;height:9.5px;background:#36383c"></div><div class="abs" style="left:18.4px;top:0px;width:9.7px;height:9.5px;background:#3b3d41"></div><div class="abs" style="left:27.6px;top:0px;width:9.7px;height:9.5px;background:#3d4044"></div><div class="abs" style="left:36.8px;top:0px;width:9.7px;height:9.5px;background:#3a3c40"></div><div class="abs" style="left:46.0px;top:0px;width:9.7px;height:9.5px;background:#38393d"></div><div class="abs" style="left:55.2px;top:0px;width:9.7px;height:9.5px;background:#3b3d40"></div><div class="abs" style="left:64.4px;top:0px;width:9.7px;height:9.5px;background:#36383b"></div><div class="abs" style="left:73.6px;top:0px;width:9.7px;height:9.5px;background:#2d2f32"></div><div class="abs" style="left:82.8px;top:0px;width:9.7px;height:9.5px;background:#34363a"></div><div class="abs" style="left:92.0px;top:0px;width:9.7px;height:9.5px;background:#3c3e42"></div><div class="abs" style="left:0.0px;top:9px;width:9.7px;height:9.5px;background:#2b302c"></div><div class="abs" style="left:9.2px;top:9px;width:9.7px;height:9.5px;background:#363d35"></div><div class="abs" style="left:18.4px;top:9px;width:9.7px;height:9.5px;background:#39403a"></div><div class="abs" style="left:27.6px;top:9px;width:9.7px;height:9.5px;background:#3b413c"></div><div class="abs" style="left:36.8px;top:9px;width:9.7px;height:9.5px;background:#3a403c"></div><div class="abs" style="left:46.0px;top:9px;width:9.7px;height:9.5px;background:#3b413d"></div><div class="abs" style="left:55.2px;top:9px;width:9.7px;height:9.5px;background:#414842"></div><div class="abs" style="left:64.4px;top:9px;width:9.7px;height:9.5px;background:#3a3f3c"></div><div class="abs" style="left:73.6px;top:9px;width:9.7px;height:9.5px;background:#2e3032"></div><div class="abs" style="left:82.8px;top:9px;width:9.7px;height:9.5px;background:#323437"></div><div class="abs" style="left:92.0px;top:9px;width:9.7px;height:9.5px;background:#36383b"></div></div>
<div class="abs" style="left:187px;top:283px;width:55.2px;height:21.0px;border-radius:10px 6px 10px 12px;overflow:hidden;filter:blur(0.5px)"><div class="abs" style="left:0.0px;top:0.0px;width:9.7px;height:11.0px;background:#2f3135"></div><div class="abs" style="left:9.2px;top:0.0px;width:9.7px;height:11.0px;background:#393a3d"></div><div class="abs" style="left:18.4px;top:0.0px;width:9.7px;height:11.0px;background:#38393d"></div><div class="abs" style="left:27.6px;top:0.0px;width:9.7px;height:11.0px;background:#37383c"></div><div class="abs" style="left:36.8px;top:0.0px;width:9.7px;height:11.0px;background:#232b28"></div><div class="abs" style="left:0.0px;top:10.5px;width:9.7px;height:11.0px;background:#2b2d30"></div><div class="abs" style="left:9.2px;top:10.5px;width:9.7px;height:11.0px;background:#343538"></div><div class="abs" style="left:18.4px;top:10.5px;width:9.7px;height:11.0px;background:#343538"></div><div class="abs" style="left:27.6px;top:10.5px;width:9.7px;height:11.0px;background:#2f3033"></div></div>
<div class="abs" style="left:234.5px;top:289px;width:1.6px;height:4px;background:#4e6b58;border-radius:1px"></div>
<div class="abs" style="left:186px;top:306px;width:92.0px;height:18px;border-radius:9px 8px 2px 9px;overflow:hidden;filter:blur(0.5px)"><div class="abs" style="left:0.0px;top:0px;width:9.7px;height:9.5px;background:#2c2e31"></div><div class="abs" style="left:9.2px;top:0px;width:9.7px;height:9.5px;background:#313336"></div><div class="abs" style="left:18.4px;top:0px;width:9.7px;height:9.5px;background:#333538"></div><div class="abs" style="left:27.6px;top:0px;width:9.7px;height:9.5px;background:#36383b"></div><div class="abs" style="left:36.8px;top:0px;width:9.7px;height:9.5px;background:#37393c"></div><div class="abs" style="left:46.0px;top:0px;width:9.7px;height:9.5px;background:#343639"></div><div class="abs" style="left:55.2px;top:0px;width:9.7px;height:9.5px;background:#323437"></div><div class="abs" style="left:64.4px;top:0px;width:9.7px;height:9.5px;background:#2e3033"></div><div class="abs" style="left:73.6px;top:0px;width:9.7px;height:9.5px;background:#27292c"></div><div class="abs" style="left:82.8px;top:0px;width:9.7px;height:9.5px;background:#212523"></div><div class="abs" style="left:0.0px;top:9px;width:9.7px;height:9.5px;background:#34373d"></div><div class="abs" style="left:9.2px;top:9px;width:9.7px;height:9.5px;background:#3d3b3b"></div><div class="abs" style="left:18.4px;top:9px;width:9.7px;height:9.5px;background:#38393d"></div><div class="abs" style="left:27.6px;top:9px;width:9.7px;height:9.5px;background:#3a3b3f"></div><div class="abs" style="left:36.8px;top:9px;width:9.7px;height:9.5px;background:#383a3e"></div><div class="abs" style="left:46.0px;top:9px;width:9.7px;height:9.5px;background:#37393c"></div><div class="abs" style="left:55.2px;top:9px;width:9.7px;height:9.5px;background:#38393d"></div><div class="abs" style="left:64.4px;top:9px;width:9.7px;height:9.5px;background:#323437"></div><div class="abs" style="left:73.6px;top:9px;width:9.7px;height:9.5px;background:#27292c"></div><div class="abs" style="left:82.8px;top:9px;width:9.7px;height:9.5px;background:#1f2422"></div></div>
<div class="abs" style="left:341px;top:263px;width:2px;height:18px;background:#ced0d6"></div>
</div>
</body></html>
